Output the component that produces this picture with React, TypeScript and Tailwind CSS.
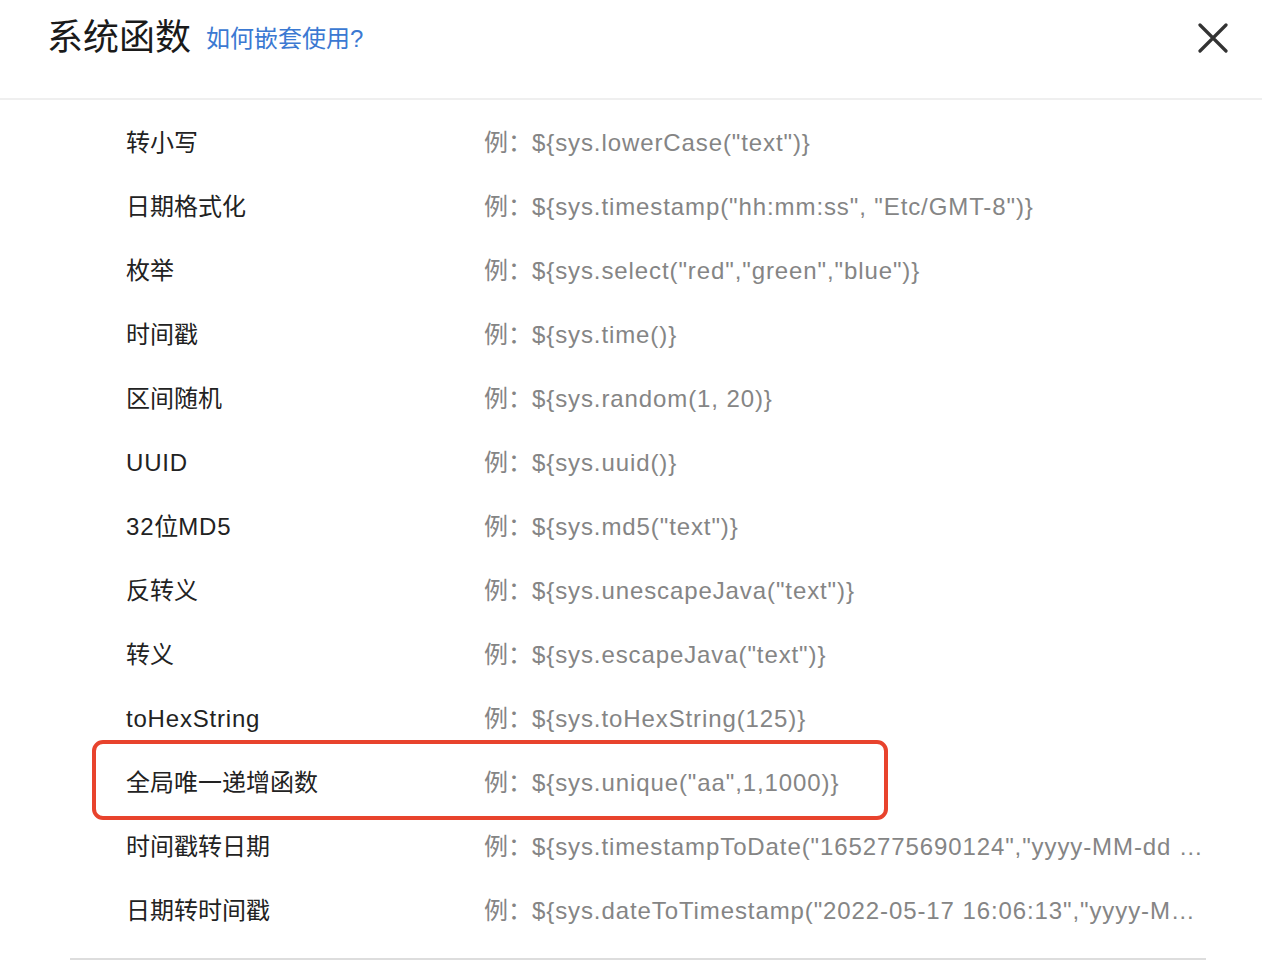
import React from "react";

const rows: [string, string][] = [
  ["转小写", '${sys.lowerCase("text")}'],
  ["日期格式化", '${sys.timestamp("hh:mm:ss", "Etc/GMT-8")}'],
  ["枚举", '${sys.select("red","green","blue")}'],
  ["时间戳", "${sys.time()}"],
  ["区间随机", "${sys.random(1, 20)}"],
  ["UUID", "${sys.uuid()}"],
  ["32位MD5", '${sys.md5("text")}'],
  ["反转义", '${sys.unescapeJava("text")}'],
  ["转义", '${sys.escapeJava("text")}'],
  ["toHexString", "${sys.toHexString(125)}"],
  ["全局唯一递增函数", '${sys.unique("aa",1,1000)}'],
  ["时间戳转日期", '${sys.timestampToDate("1652775690124","yyyy-MM-dd HH:mm:ss")}'],
  ["日期转时间戳", '${sys.dateToTimestamp("2022-05-17 16:06:13","yyyy-MM-dd HH:mm:ss")}'],
];

function Mixed({ text }: { text: string }) {
  const parts = text.match(/[\u4e00-\u9fff]+|[^\u4e00-\u9fff]+/g) || [];
  return (
    <>
      {parts.map((p, i) =>
        /[\u4e00-\u9fff]/.test(p) ? (
          <span key={i}>{p}</span>
        ) : (
          <span key={i} className="tracking-[0.8px]">{p}</span>
        )
      )}
    </>
  );
}

export default function App() {
  return (
    <div
      className="w-[1262px] h-[974px] bg-white overflow-hidden"
      style={{ fontFamily: '"Liberation Sans", "Noto Sans CJK SC", sans-serif' }}
    >
      <div className="h-[100px] border-b-2 border-[#efefef] flex items-center pl-[47px] pr-[34px] pb-[22px]">
        <span className="text-[36px] leading-normal text-[#1a1a1a]">系统函数</span>
        <span className="ml-[15px] text-[24px] leading-normal text-[#3b79d2] mt-[2px]">如何嵌套使用?</span>
        <div className="ml-auto">
          <svg width="30" height="30" viewBox="0 0 30 30" fill="none" stroke="#333" strokeWidth="3.2" strokeLinecap="round">
            <path d="M2 2 L28 28 M28 2 L2 28" />
          </svg>
        </div>
      </div>
      <div className="ml-[70px] mr-[56px] pt-[11px] pb-[15px] border-b-2 border-[#dddddd]">
        {rows.map(([label, code], i) => (
          <div key={i} className="relative h-[64px] flex items-center text-[24px] leading-normal">
            {i === 10 && (
              <div className="absolute left-[22px] w-[796px] top-[-11px] bottom-[-5px] border-4 border-[#e8432d] rounded-[11px]" />
            )}
            <div className="w-[414px] pl-[56px] text-[#222]">
              <Mixed text={label} />
            </div>
            <div className="flex-1 min-w-0 pr-[2px] text-[#858585] whitespace-nowrap overflow-hidden text-ellipsis">
              例：<span className="tracking-[0.9px]">{code}</span>
            </div>
          </div>
        ))}
      </div>
    </div>
  );
}
